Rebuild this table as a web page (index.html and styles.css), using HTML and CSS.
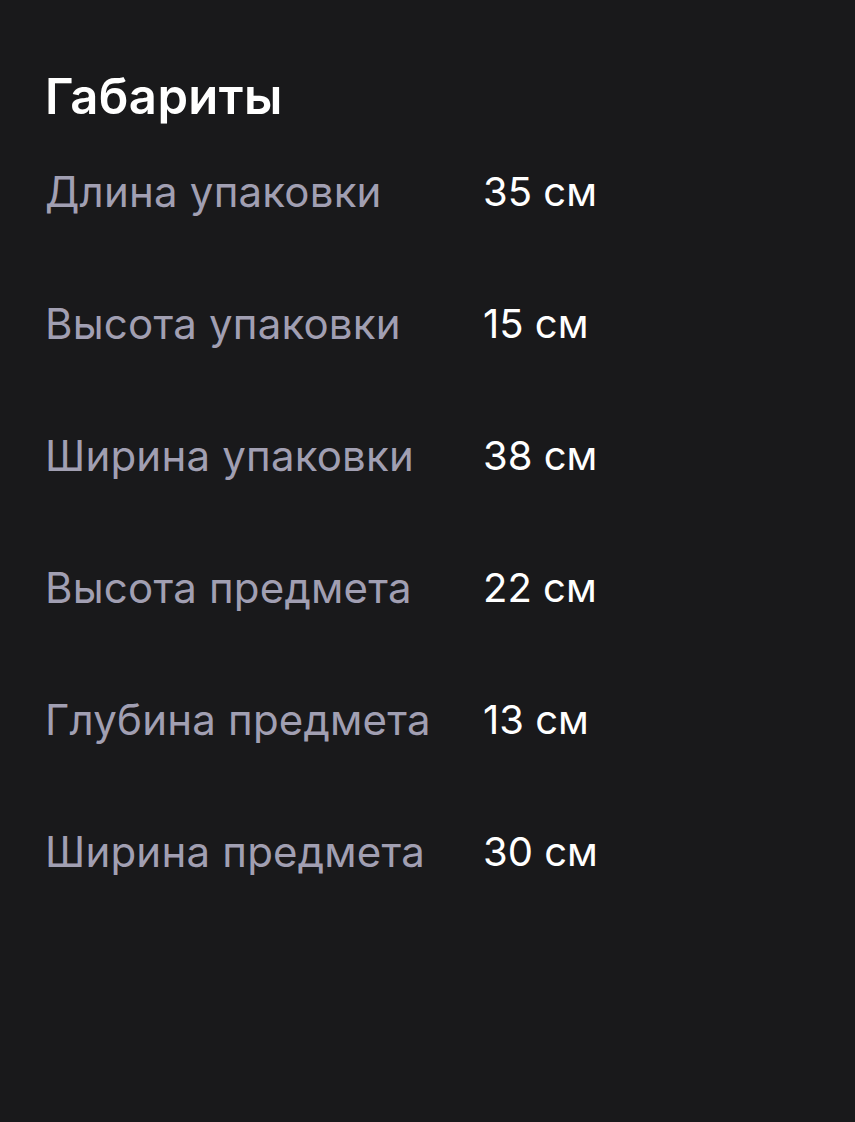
FILE: index.html
```html
<!DOCTYPE html>
<html lang="ru">
<head>
<meta charset="utf-8">
<link rel="stylesheet" href="styles.css">
</head>
<body>
<section class="specs">
  <h2 class="title">Габариты</h2>
  <dl class="list">
    <dt class="label">Длина упаковки</dt><dd class="value">35 см</dd>
    <dt class="label">Высота упаковки</dt><dd class="value">15 см</dd>
    <dt class="label">Ширина упаковки</dt><dd class="value">38 см</dd>
    <dt class="label">Высота предмета</dt><dd class="value">22 см</dd>
    <dt class="label">Глубина предмета</dt><dd class="value">13 см</dd>
    <dt class="label">Ширина предмета</dt><dd class="value">30 см</dd>
  </dl>
</section>
</body>
</html>
```
FILE: styles.css
```css
html, body {
  margin: 0;
  padding: 0;
  background: #19191b;
  height: 100%;
}
body {
  font-family: Inter, "Noto Sans", sans-serif;
  -webkit-font-smoothing: antialiased;
}
.specs {
  padding: 68px 0 0 45px;
}
.title {
  margin: 0 0 42px;
  font-size: 49px;
  line-height: 58px;
  font-weight: 600;
  color: #ffffff;
  letter-spacing: 0.4px;
}
.list {
  margin: 0;
  display: grid;
  grid-template-columns: 438px auto;
  row-gap: 84px;
}
.label, .value {
  margin: 0;
  line-height: 48px;
  font-weight: 400;
}
.label {
  font-size: 42px;
  color: #a19fb2;
  letter-spacing: 0.2px;
}
.value {
  font-size: 40px;
  color: #ffffff;
}
```
